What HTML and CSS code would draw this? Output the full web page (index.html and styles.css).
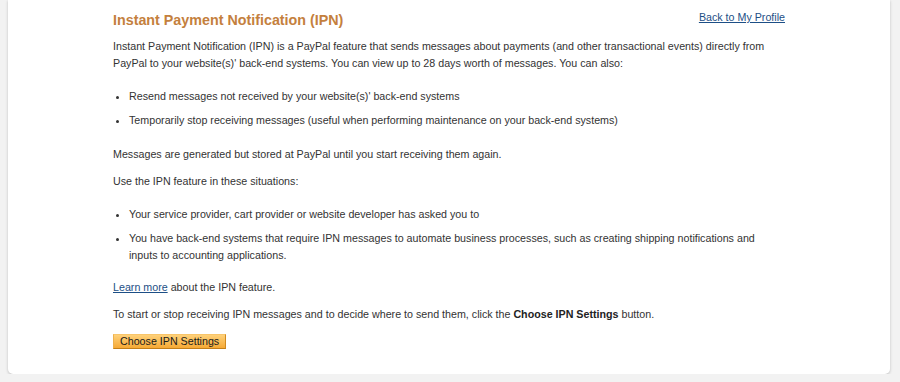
FILE: index.html
```html
<!DOCTYPE html>
<html lang="en">
<head>
<meta charset="utf-8">
<title>Instant Payment Notification (IPN)</title>
<link rel="stylesheet" href="styles.css">
</head>
<body>
<div class="card">
  <div class="header">
    <h1 class="title">Instant Payment Notification (IPN)</h1>
    <a class="back" href="#">Back to My Profile</a>
  </div>
  <p>Instant Payment Notification (IPN) is a PayPal feature that sends messages about payments (and other transactional events) directly from PayPal to your website(s)' back-end systems. You can view up to 28 days worth of messages. You can also:</p>
  <ul class="list list-first">
    <li>Resend messages not received by your website(s)' back-end systems</li>
    <li>Temporarily stop receiving messages (useful when performing maintenance on your back-end systems)</li>
  </ul>
  <p>Messages are generated but stored at PayPal until you start receiving them again.</p>
  <p>Use the IPN feature in these situations:</p>
  <ul class="list list-second">
    <li>Your service provider, cart provider or website developer has asked you to</li>
    <li>You have back-end systems that require IPN messages to automate business processes, such as creating shipping notifications and inputs to accounting applications.</li>
  </ul>
  <p><a class="link" href="#">Learn more</a> about the IPN feature.</p>
  <p>To start or stop receiving IPN messages and to decide where to send them, click the <strong>Choose IPN Settings</strong> button.</p>
  <div class="actions">
    <button class="btn" type="button">Choose IPN Settings</button>
  </div>
</div>
</body>
</html>
```

FILE: styles.css
```css
html, body {
  margin: 0;
  padding: 0;
  background: #f2f2f2;
}

body {
  font-family: Arial, "Liberation Sans", sans-serif;
  font-size: 10.7px;
  line-height: 17px;
  color: #333333;
}

.card {
  margin: 0 10px 0 8px;
  background: #ffffff;
  border-radius: 0 0 5px 5px;
  box-shadow: 0 1px 3px rgba(0, 0, 0, 0.22);
  padding: 11px 105px 25px 105px;
}

.header {
  display: flex;
  justify-content: space-between;
  align-items: flex-start;
  margin-bottom: 9px;
}

.title {
  margin: 0;
  font-size: 14.3px;
  line-height: 18px;
  font-weight: bold;
  color: #c4803d;
}

.back {
  line-height: 13px;
  color: #1d4f86;
  text-decoration: underline;
}

p {
  margin: 0 0 10px;
}

.list {
  margin: 16px 0 16px;
  padding-left: 16px;
}

.list-first {
  margin-bottom: 17px;
}

.list-second {
  margin-bottom: 15px;
}

.list li {
  margin-bottom: 7px;
}

.list li:last-child {
  margin-bottom: 0;
}

.link {
  color: #1d4f86;
  text-decoration: underline;
}

strong {
  font-weight: bold;
  color: #222222;
}

.actions {
  margin-top: 11px;
  display: flex;
}

.btn {
  font-family: Arial, "Liberation Sans", sans-serif;
  font-size: 10.7px;
  line-height: 13px;
  color: #1a1a1a;
  padding: 0 6px;
  margin: 0;
  background: linear-gradient(#fed17a, #f6a935);
  border: 1px solid;
  border-color: #f8c56a #d08a20 #c47f17 #eeb14c;
  border-radius: 0;
  cursor: pointer;
}
```
